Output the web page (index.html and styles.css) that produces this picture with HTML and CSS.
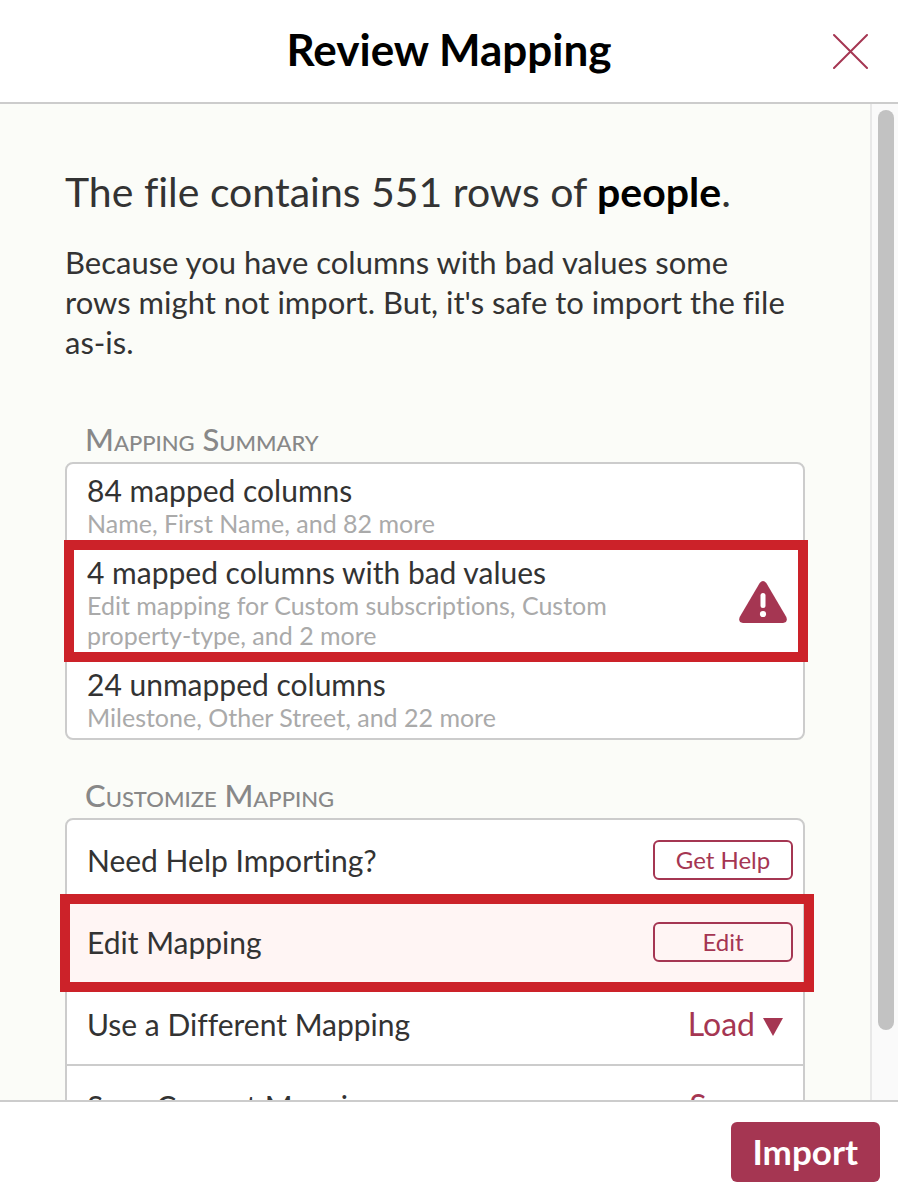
FILE: index.html
```html
<!DOCTYPE html>
<html lang="en">
<head>
<meta charset="utf-8">
<meta name="viewport" content="width=device-width, initial-scale=1">
<title>Review Mapping</title>
<link rel="stylesheet" href="styles.css">
</head>
<body>
<div class="dialog" role="dialog" aria-labelledby="dialog-title">
  <header class="dialog-header">
    <h1 class="dialog-title" id="dialog-title">Review Mapping</h1>
    <button class="close" type="button" aria-label="Close">
      <svg width="36" height="36" viewBox="0 0 36 36" fill="none" stroke="currentColor" stroke-width="2" stroke-linecap="round"><path d="M1 2L34 35M34 2L1 35"/></svg>
    </button>
  </header>
  <div class="dialog-body">
    <main class="content">
      <h2 class="headline">The file contains 551 rows of <strong>people</strong>.</h2>
      <p class="intro">Because you have columns with bad values some rows might not import. But, it's safe to import the file as-is.</p>

      <section class="section">
        <h3 class="section-title">Mapping Summary</h3>
        <ul class="card">
          <li class="row summary">
            <div class="text"><div class="name">84 mapped columns</div><div class="detail">Name, First Name, and 82 more</div></div>
          </li>
          <li class="row summary">
            <div class="text"><div class="name">4 mapped columns with bad values</div><div class="detail">Edit mapping for Custom subscriptions, Custom property-type, and 2 more</div></div>
            <svg class="warning" width="48" height="42" viewBox="0 0 48 42" role="img" aria-label="Warning"><path fill="#a53652" d="M20.7 1.9Q24-1.9 27.3 1.9L47.3 36Q49.200 41.500 44 42H4Q-1.200 41.500.7 36Z"/><rect x="21.500" y="12" width="5" height="15" rx="2.500" fill="#fff"/><circle cx="24" cy="33" r="3.100" fill="#fff"/></svg>
            <span class="callout callout-summary"></span>
          </li>
          <li class="row summary">
            <div class="text"><div class="name">24 unmapped columns</div><div class="detail">Milestone, Other Street, and 22 more</div></div>
          </li>
        </ul>
      </section>

      <section class="section">
        <h3 class="section-title">Customize Mapping</h3>
        <ul class="card">
          <li class="row action">
            <span class="name">Need Help Importing?</span>
            <button class="outline" type="button">Get Help</button>
          </li>
          <li class="row action active">
            <span class="name">Edit Mapping</span>
            <button class="outline" type="button">Edit</button>
            <span class="callout callout-action"></span>
          </li>
          <li class="row action">
            <span class="name">Use a Different Mapping</span>
            <button class="menu" type="button">Load <svg width="20" height="18" viewBox="0 0 20 18"><path fill="currentColor" d="M0 0H20L10 18Z"/></svg></button>
          </li>
          <li class="row action">
            <span class="name">Save Current Mapping</span>
            <button class="menu" type="button">Save <svg width="20" height="18" viewBox="0 0 20 18"><path fill="currentColor" d="M0 0H20L10 18Z"/></svg></button>
          </li>
        </ul>
      </section>
    </main>
    <div class="track" aria-hidden="true"><div class="thumb"></div></div>
  </div>
  <footer class="dialog-footer">
    <button class="primary" type="button">Import</button>
  </footer>
</div>
</body>
</html>
```
FILE: styles.css
```css
* { box-sizing: border-box; }

body {
  margin: 0;
  background: #fff;
  color: #333;
  font-family: Lato, "Open Sans", sans-serif;
  font-variant-ligatures: none;
}

h1, h2, h3, p, ul { margin: 0; padding: 0; }

button {
  border: 0;
  padding: 0;
  background: none;
  color: #a53652;
  font-family: inherit;
  font-variant-ligatures: inherit;
  cursor: pointer;
}

.dialog {
  display: flex;
  flex-direction: column;
  height: 100vh;
}

.dialog-header {
  display: grid;
  grid-template-columns: 36px 1fr 36px;
  align-items: center;
  flex: none;
  height: 104px;
  padding: 0 29px;
  border-bottom: 2px solid #ccc;
}

.dialog-title {
  grid-column: 2;
  padding-bottom: 4px;
  color: #000;
  font-size: 44px;
  line-height: 56px;
  text-align: center;
}

.close { height: 36px; }
.close svg { display: block; }

.dialog-body {
  display: flex;
  flex: 1;
  min-height: 0;
  background: #fbfcf8;
}

.content {
  flex: 1;
  min-width: 0;
  overflow: hidden;
  padding: 60px 65px 0;
}

.headline {
  color: #333;
  font-size: 41px;
  font-weight: 400;
  line-height: 56px;
}

.headline strong { color: #000; }

.intro {
  margin-top: 22px;
  padding-right: 8px;
  font-size: 31px;
  line-height: 40px;
}

.section { margin-top: 60px; }
.section + .section { margin-top: 38px; }

.section-title {
  padding: 0 20px 6px;
  color: #888;
  font-size: 31px;
  font-weight: 500;
  font-variant-caps: small-caps;
  line-height: 34px;
}

.card {
  list-style: none;
  border: 2px solid #ccc;
  border-radius: 8px;
  background: #fff;
}

.row {
  position: relative;
  display: flex;
  align-items: center;
  justify-content: space-between;
  border-bottom: 2px solid #ccc;
}

.row:last-child { border-bottom: 0; }

.summary { padding: 8px 16px 6px 20px; }
.text { max-width: 560px; }

.action {
  height: 82px;
  padding: 0 10px 0 20px;
}

.action:last-child { height: 80px; }

.active { background: #fff5f4; }

.name {
  font-size: 30px;
  line-height: 36px;
}

.detail {
  color: #aaa;
  font-size: 25px;
  line-height: 30px;
}

.warning { flex: none; }

.callout {
  position: absolute;
  z-index: 1;
  border: 10px solid #cc2229;
  pointer-events: none;
}

.callout-summary { inset: -6px -5px -6px -3px; }
.callout-action { inset: -8px -11px -10px -7px; }

.outline {
  width: 140px;
  height: 40px;
  border: 2px solid #a53652;
  border-radius: 6px;
  font-size: 24px;
  line-height: 32px;
}

.menu {
  display: flex;
  align-items: baseline;
  gap: 8px;
  padding-right: 10px;
  font-size: 32px;
  line-height: 36px;
}

.track {
  display: flex;
  flex: none;
  width: 28px;
  padding: 6px 4px 70px 6px;
  border-left: 2px solid #e8e8e8;
  background: #fafafa;
}

.thumb {
  flex: 1;
  border-radius: 8px;
  background: #c2c2c2;
}

.dialog-footer {
  display: flex;
  flex: none;
  align-items: flex-start;
  justify-content: flex-end;
  height: 100px;
  padding: 20px 18px;
  border-top: 2px solid #ccc;
}

.primary {
  height: 60px;
  padding: 0 22px 2px;
  border-radius: 6px;
  background: #a53652;
  color: #fff;
  font-size: 35px;
  font-weight: 700;
}
```
